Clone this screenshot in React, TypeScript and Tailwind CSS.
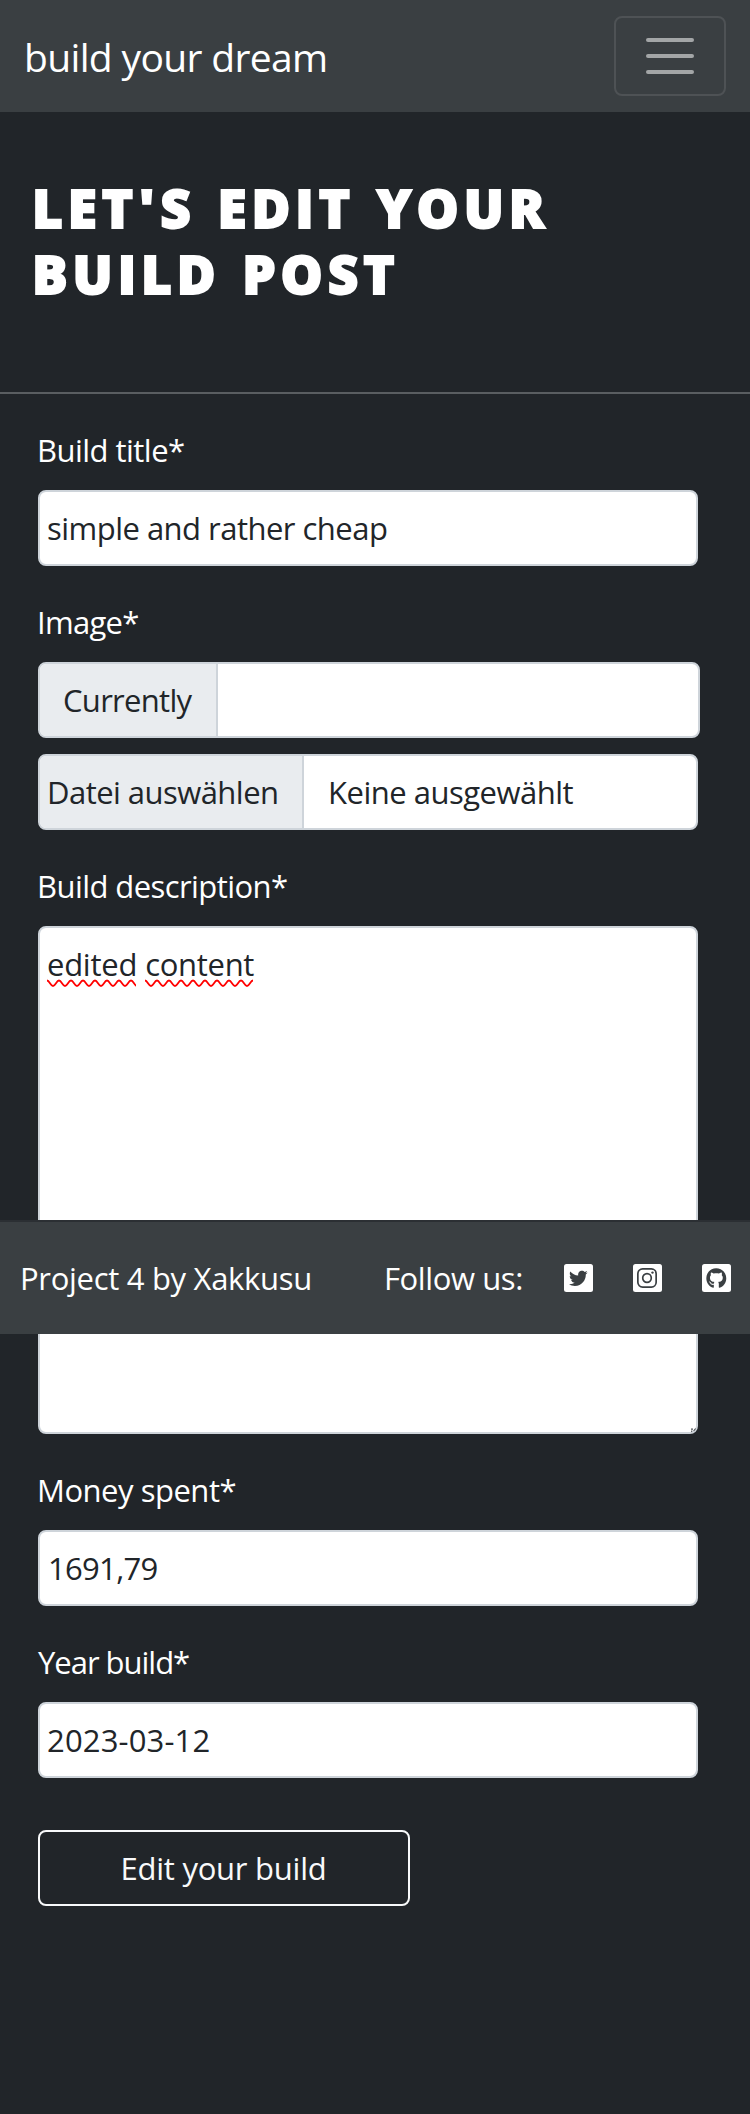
import type { ReactNode } from "react";
import { FaGithub, FaTwitter } from "react-icons/fa";

const control =
  "flex h-[76px] w-[660px] items-center rounded-[8px] border-2 border-[#ced4da] bg-white text-[#212529] overflow-hidden";

function Label({ className, children }: { className: string; children: ReactNode }) {
  return <label className={`block h-12 mb-4 whitespace-nowrap leading-[48px] text-white ${className}`}>{children}</label>;
}

function Misspelled({ width, className, children }: { width: number; className: string; children: ReactNode }) {
  let d = "M0 1.5";
  for (let x = 0; x < width + 12; x += 12) {
    d += ` C${x + 2.5} 1.5 ${x + 3.5} 7 ${x + 6} 7 S${x + 9.5} 1.5 ${x + 12} 1.5`;
  }
  return (
    <span className={`relative ${className}`}>
      {children}
      <svg className="absolute left-0 top-[36px]" width={width} height="9" viewBox={`0 0 ${width} 9`}>
        <path d={d} fill="none" stroke="#ff0000" strokeWidth="1.8" />
      </svg>
    </span>
  );
}

function SocialTile({ children }: { children: ReactNode }) {
  return <a className="flex h-7 w-[28.5px] items-center justify-center rounded-[2.5px] bg-white text-[#3a3f42]">{children}</a>;
}

export default function App() {
  return (
    <div className="relative h-[2114px] w-[750px] overflow-hidden bg-[#212529] font-['Open_Sans',sans-serif] text-[31px]">
      <nav className="flex h-[112px] items-center justify-between bg-[#3a3f42] pl-[24px] pr-6">
        <a className="whitespace-nowrap pt-[2px] text-[39px] leading-[60px] tracking-[-0.65px] text-white">build your dream</a>
        <button className="flex h-20 w-28 flex-col items-center gap-3 rounded-[8px] border-2 border-[#4e5255] pt-5">
          <span className="h-1 w-12 rounded-full bg-[#a3a6a7]" />
          <span className="h-1 w-12 rounded-full bg-[#a3a6a7]" />
          <span className="h-1 w-12 rounded-full bg-[#a3a6a7]" />
        </button>
      </nav>

      <header className="h-[282px] border-b-2 border-[#5a5e61] pl-[32px] pt-[63px]">
        <h1 className="text-[53px] font-extrabold leading-[66px] tracking-[4.9px] text-white [-webkit-text-stroke:1.8px_white] [word-spacing:3px]">
          LET<span className="px-[1px]">'</span>S EDIT YOUR
          <br />
          BUILD POST
        </h1>
      </header>

      <form className="pl-[38px] pt-8">
        <div className="mb-8">
          <Label className="-ml-[1px] tracking-[-0.53px]">Build title*</Label>
          <div className={`${control} pl-[7px]`}>
            <span className="tracking-[-0.52px]">simple and rather cheap</span>
          </div>
        </div>

        <div className="mb-8">
          <Label className="-ml-[1px] tracking-[-0.7px]">Image*</Label>
          <div className="mb-4 flex h-[76px] w-[662px] overflow-hidden rounded-[8px] border-2 border-[#ced4da] bg-white text-[#212529]">
            <span className="flex w-[178px] items-center border-r-2 border-[#ced4da] bg-[#e9ecef] pl-[23px] tracking-[-0.7px]">Currently</span>
          </div>
          <div className={control}>
            <span className="flex h-full w-[264px] items-center whitespace-nowrap border-r-2 border-[#ced4da] bg-[#e9ecef] pl-[7px] tracking-[-0.54px]">
              Datei auswählen
            </span>
            <span className="pl-[24px] tracking-[-0.5px]">Keine ausgewählt</span>
          </div>
        </div>

        <div className="mb-8">
          <Label className="-ml-[1px] tracking-[-0.57px]">Build description*</Label>
          <div className="relative h-[508px] w-[660px] rounded-[8px] border-2 border-[#ced4da] bg-white pl-[7px] pt-3 leading-[48px] text-[#212529]">
            <Misspelled width={89} className="tracking-[-0.25px]">edited</Misspelled>{" "}
            <Misspelled width={108} className="tracking-[-0.3px]">content</Misspelled>
            <svg className="absolute -bottom-[1px] -right-[1px]" width="6" height="6" viewBox="0 0 6 6">
              <path d="M0 2.2h2M1 3.5l-.6 1.5M4.6 1.5L2.6 4" stroke="#50555a" strokeWidth="1.2" fill="none" />
            </svg>
          </div>
        </div>

        <div className="mb-8">
          <Label className="-ml-[1px] tracking-[-0.48px]">Money spent*</Label>
          <div className={`${control} pl-2`}>
            <span className="tracking-[-0.69px]">1691,79</span>
          </div>
        </div>

        <div className="mb-[52px]">
          <Label className="tracking-[-1.02px]">Year build*</Label>
          <div className={`${control} pl-[7px]`}>
            <span className="tracking-[0.16px]">2023-03-12</span>
          </div>
        </div>

        <button
          type="button"
          className="flex h-[76px] w-[372px] items-center justify-center rounded-[8px] border-2 border-[#f8f9fa] pr-[1px] leading-[48px] tracking-[-0.25px] text-[#f8f9fa]"
        >
          Edit your build
        </button>
      </form>

      <footer className="absolute left-0 top-[1220px] flex h-[114px] w-full items-center border-t-2 border-[#2b2f33] bg-[#3a3f42] pl-[20px] text-white">
        <span className="w-[364px] whitespace-nowrap leading-[48px] tracking-[-0.3px]">Project 4 by Xakkusu</span>
        <span className="w-[180px] whitespace-nowrap leading-[48px] tracking-[-0.4px]">Follow us:</span>
        <div className="flex gap-[40.5px]">
          <SocialTile>
            <FaTwitter className="h-[18.7px] w-[18.7px]" />
          </SocialTile>
          <SocialTile>
            <svg width="20" height="20" viewBox="0 0 20 20" fill="none" stroke="currentColor" strokeWidth="1.7">
              <rect x="0.85" y="0.85" width="18.3" height="18.3" rx="4.8" />
              <circle cx="10" cy="10" r="4.3" />
              <circle cx="15.5" cy="4.6" r="1.2" fill="currentColor" stroke="none" />
            </svg>
          </SocialTile>
          <SocialTile>
            <FaGithub className="h-[20.6px] w-[20.6px]" />
          </SocialTile>
        </div>
      </footer>
    </div>
  );
}
